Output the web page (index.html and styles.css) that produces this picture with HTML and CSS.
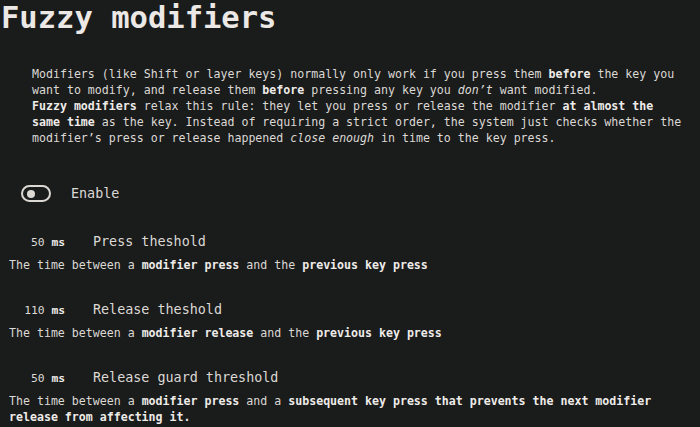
FILE: index.html
```html
<!DOCTYPE html>
<html>
<head>
<meta charset="utf-8">
<link rel="stylesheet" href="styles.css">
</head>
<body>
<div class="page">
  <h1 class="title">Fuzzy modifiers</h1>
  <div class="intro">
    <p>Modifiers (like Shift or layer keys) normally only work if you press them <b>before</b> the key you want to modify, and release them <b>before</b> pressing any key you <i>don’t</i> want modified.</p>
    <p><b>Fuzzy modifiers</b> relax this rule: they let you press or release the modifier <b>at almost the same time</b> as the key. Instead of requiring a strict order, the system just checks whether the modifier’s press or release happened <i>close enough</i> in time to the key press.</p>
  </div>
  <div class="enable">
    <span class="toggle"><span class="knob"></span></span>
    <span class="enable-label">Enable</span>
  </div>
  <div class="settings">
    <div class="setting">
      <div class="setting-head"><span class="value">50 <b>ms</b></span><span class="name">Press theshold</span></div>
      <p class="desc">The time between a <b>modifier press</b> and the <b>previous key press</b></p>
    </div>
    <div class="setting">
      <div class="setting-head"><span class="value">110 <b>ms</b></span><span class="name">Release theshold</span></div>
      <p class="desc">The time between a <b>modifier release</b> and the <b>previous key press</b></p>
    </div>
    <div class="setting">
      <div class="setting-head"><span class="value">50 <b>ms</b></span><span class="name">Release guard threshold</span></div>
      <p class="desc">The time between a <b>modifier press</b> and a <b>subsequent key press that prevents the next modifier release from affecting it.</b></p>
    </div>
  </div>
</div>
</body>
</html>
```
FILE: styles.css
```css
html, body {
  margin: 0;
  padding: 0;
  background: #1a1b1b;
}
body {
  color: #dcd9d5;
  font-family: "DejaVu Sans Mono", "Liberation Mono", monospace;
  font-size: 11.6px;
  line-height: 16px;
}
.page {
  padding: 0 0 0 1px;
}
.title {
  margin: 0;
  font-size: 30.5px;
  line-height: 36px;
  font-weight: bold;
  color: #ebe8e5;
}
.intro {
  margin: 30px 16px 0 31px;
}
.intro p {
  margin: 0;
}
b { font-weight: bold; color: #eeebe8; }
.enable {
  display: flex;
  align-items: center;
  gap: 20px;
  margin: 39px 0 0 20px;
}
.toggle {
  box-sizing: border-box;
  width: 30px;
  height: 17px;
  border: 2px solid #dcd9d5;
  border-radius: 9px;
  display: flex;
  align-items: center;
  padding-left: 4px;
}
.knob {
  width: 8px;
  height: 8px;
  border-radius: 50%;
  background: #dcd9d5;
}
.enable-label {
  font-size: 13.4px;
}
.settings {
  display: flex;
  flex-direction: column;
  gap: 29px;
  margin-top: 32px;
}
.setting-head {
  display: flex;
  align-items: baseline;
  gap: 28px;
}
.value {
  width: 64px;
  text-align: right;
  font-size: 11.3px;
}
.name {
  font-size: 13.4px;
}
.desc {
  margin: 6px 0 0 8px;
}
```
